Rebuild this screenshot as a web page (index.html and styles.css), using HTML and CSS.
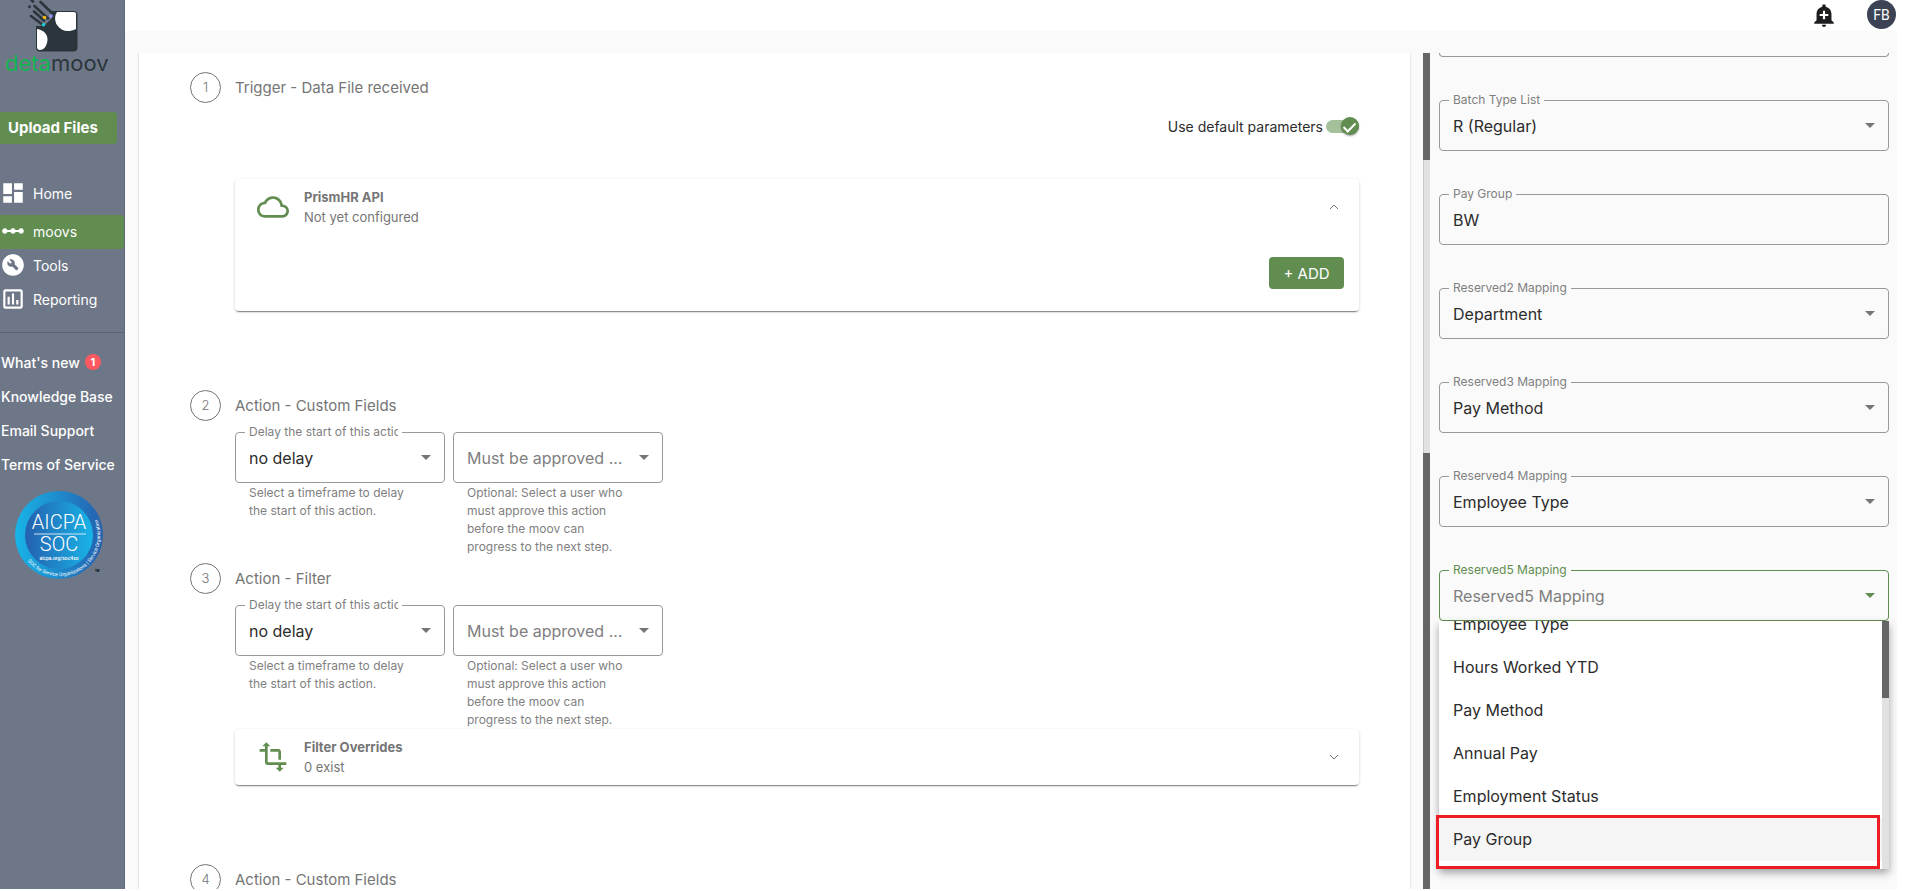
FILE: index.html
```
<!DOCTYPE html>
<html lang="en">
<head>
  <meta charset="UTF-8">
  <meta name="viewport" content="width=device-width, initial-scale=1.0">
  <title>detamoov - moovs</title>
  <link rel="stylesheet" href="styles.css">
</head>
<body>
<div class="app">
  <aside class="sidebar">
    <a class="logo" href="#">
      <svg class="logo-mark" viewBox="27 0 51 52">
        <path d="M50 11H73.500a4 4 0 0 1 4 4V47.500a4 4 0 0 1-4 4H40a4 4 0 0 1-4-4V26L44 26L52 18Z" fill="#2b353c"/>
        <path d="M57 12H74a2 2 0 0 1 2 2V29C68 33 61 31 57 25C54 20 55 15 57 12Z" fill="#fff"/>
        <path d="M37 29C44 30 48 35 47.500 40C47 46 44 50 40 50A3 3 0 0 1 37 47Z" fill="#fff"/>
        <g stroke="#2b353c" stroke-width="2.600" stroke-linecap="round">
          <path d="M31 16L43 25M34 11.500L44 20.500M34.500 6L48 18.500M40.500 2L52 13M29.500 6.500v.5M31.500 0L33 1.500"/>
        </g>
        <circle cx="44.500" cy="17.500" r="1.800" fill="#f5b916"/>
        <circle cx="51" cy="16" r="1.800" fill="#8f96f5"/>
        <circle cx="43.500" cy="24.800" r="1.800" fill="#18cfd4"/>
      </svg>
      <span class="logo-text"><span class="logo-green">deta</span>moov</span>
    </a>

    <button class="upload-button" type="button">Upload Files</button>

    <nav class="nav">
      <a class="nav-item" href="#">
        <svg class="nav-icon" viewBox="0 0 24 24"><path d="M3 13h8V3H3v10zm0 8h8v-6H3v6zm10 0h8V11h-8v10zm0-18v6h8V3h-8z"/></svg>
        Home
      </a>
      <a class="nav-item active" href="#">
        <svg class="nav-icon" viewBox="0 0 24 24"><path d="M19.500 9.500c-1.030 0-1.900.62-2.290 1.500h-2.920c-.39-.88-1.260-1.500-2.290-1.500s-1.900.62-2.290 1.500H6.790c-.39-.88-1.260-1.500-2.290-1.500C3.120 9.500 2 10.620 2 12s1.120 2.500 2.500 2.500c1.030 0 1.900-.62 2.290-1.500h2.920c.39.88 1.260 1.500 2.290 1.500s1.900-.62 2.290-1.500h2.920c.39.88 1.260 1.500 2.290 1.500 1.380 0 2.500-1.120 2.500-2.500s-1.120-2.500-2.500-2.500z"/></svg>
        moovs
      </a>
      <a class="nav-item" href="#">
        <svg class="nav-icon" viewBox="0 0 24 24"><path fill-rule="evenodd" d="M12 2C6.480 2 2 6.480 2 12s4.480 10 10 10 10-4.480 10-10S17.520 2 12 2zm4.900 13.490l-1.400 1.400c-.2.200-.51.200-.71 0l-3.410-3.410c-1.220.43-2.640.17-3.620-.81-1.110-1.110-1.300-2.790-.59-4.100l2.350 2.350 1.410-1.410-2.350-2.350c1.320-.71 2.990-.52 4.100.59.98.98 1.240 2.400.81 3.620l3.410 3.410c.19.190.19.510 0 .71z"/></svg>
        Tools
      </a>
      <a class="nav-item" href="#">
        <svg class="nav-icon" viewBox="0 0 24 24"><path d="M19 3H5c-1.100 0-2 .9-2 2v14c0 1.100.9 2 2 2h14c1.100 0 2-.9 2-2V5c0-1.100-.9-2-2-2zm0 16H5V5h14v14zM7 10h2v7H7zm4-3h2v10h-2zm4 6h2v4h-2z"/></svg>
        Reporting
      </a>
    </nav>

    <nav class="links">
      <a href="#">What's new <span class="count">1</span></a>
      <a href="#">Knowledge Base</a>
      <a href="#">Email Support</a>
      <a href="#">Terms of Service</a>
    </nav>

    <svg class="soc" viewBox="0 0 88 88">
      <defs>
        <linearGradient id="socOuter"><stop offset="0" stop-color="#18b4e8"/><stop offset="1" stop-color="#2560ae"/></linearGradient>
        <linearGradient id="socInner"><stop offset="0" stop-color="#2560ae"/><stop offset="1" stop-color="#18b4e8"/></linearGradient>
        <path id="socArc" d="M12.500 70A41 41 0 0 0 82 28"/>
      </defs>
      <circle cx="44" cy="44" r="44" fill="url(#socOuter)"/>
      <circle cx="44" cy="44" r="34" fill="url(#socInner)"/>
      <path d="M19 43H71" stroke="#fff" stroke-width=".8"/>
      <g fill="#fff" text-anchor="middle">
        <text class="soc-big" x="44" y="38">AICPA</text>
        <text class="soc-big" x="44" y="60">SOC</text>
        <text class="soc-url" x="44" y="69">aicpa.org/soc4so</text>
      </g>
      <text class="soc-ring" fill="#fff"><textPath href="#socArc">SOC for Service Organizations | Service Organizations</textPath></text>
      <text class="soc-tm" x="80" y="81">TM</text>
    </svg>
  </aside>

  <div class="main">
    <header class="topbar">
      <button class="bell" type="button" aria-label="Notifications">
        <svg viewBox="0 0 24 24"><path d="M10.010 21.010c0 1.100.89 1.990 1.990 1.990s1.990-.89 1.990-1.990h-3.980zm8.870-4.190V11c0-3.250-2.250-5.970-5.290-6.690v-.72C13.590 2.710 12.880 2 12 2s-1.590.71-1.590 1.590v.72C7.370 5.030 5.120 7.750 5.120 11v5.820L3 18.940V20h18v-1.060l-2.120-2.120zM16 13.010h-3v3h-2v-3H8V11h3V8h2v3h3v2.010z"/></svg>
      </button>
      <button class="avatar" type="button">FB</button>
    </header>

    <div class="content">
      <section class="stepper">
        <div class="step">
          <span class="step-number">1</span>
          <h2 class="step-title">Trigger - Data File received</h2>
          <div class="step-body">
            <div class="default-row">
              <label for="useDefault">Use default parameters</label>
              <input class="toggle" id="useDefault" type="checkbox" checked>
            </div>
            <div class="card">
              <div class="card-header">
                <svg class="card-icon" viewBox="0 0 24 24"><path d="M19.350 10.040C18.670 6.590 15.640 4 12 4 9.110 4 6.600 5.640 5.350 8.040 2.340 8.360 0 10.910 0 14c0 3.310 2.690 6 6 6h13c2.760 0 5-2.240 5-5 0-2.640-2.050-4.780-4.650-4.960zM19 18H6c-2.210 0-4-1.790-4-4 0-2.050 1.530-3.760 3.560-3.970l1.070-.11.500-.95C8.080 7.140 9.940 6 12 6c2.620 0 4.880 1.860 5.390 4.430l.3 1.500 1.530.11c1.560.1 2.780 1.410 2.780 2.960 0 1.650-1.350 3-3 3z"/></svg>
                <div class="card-heading">
                  <h3>PrismHR API</h3>
                  <p>Not yet configured</p>
                </div>
                <button class="expand" type="button" aria-label="Collapse"><svg viewBox="0 0 10 6"><path d="M1 5L5 1L9 5"/></svg></button>
              </div>
              <div class="card-actions">
                <button class="add-button" type="button">+ ADD</button>
              </div>
            </div>
          </div>
        </div>

        <div class="step">
          <span class="step-number">2</span>
          <h2 class="step-title">Action - Custom Fields</h2>
          <div class="step-body">
            <div class="field-row">
              <div class="field-group">
                <div class="field">
                  <label for="delay2">Delay the start of this action</label>
                  <select id="delay2"><option>no delay</option></select>
                </div>
                <p class="hint">Select a timeframe to delay the start of this action.</p>
              </div>
              <div class="field-group">
                <div class="field">
                  <select class="placeholder" id="approver2" aria-label="Must be approved"><option>Must be approved ...</option></select>
                </div>
                <p class="hint">Optional: Select a user who must approve this action before the moov can progress to the next step.</p>
              </div>
            </div>
          </div>
        </div>

        <div class="step">
          <span class="step-number">3</span>
          <h2 class="step-title">Action - Filter</h2>
          <div class="step-body">
            <div class="field-row">
              <div class="field-group">
                <div class="field">
                  <label for="delay3">Delay the start of this action</label>
                  <select id="delay3"><option>no delay</option></select>
                </div>
                <p class="hint">Select a timeframe to delay the start of this action.</p>
              </div>
              <div class="field-group">
                <div class="field">
                  <select class="placeholder" id="approver3" aria-label="Must be approved"><option>Must be approved ...</option></select>
                </div>
                <p class="hint">Optional: Select a user who must approve this action before the moov can progress to the next step.</p>
              </div>
            </div>
            <div class="card">
              <div class="card-header">
                <svg class="card-icon" viewBox="0 0 24 24"><path d="M22 18v-2H8V4h2L7 1 4 4h2v2H2v2h4v8c0 1.100.9 2 2 2h8v2h-2l3 3 3-3h-2v-2h4zM10 8h6v6h2V8c0-1.100-.9-2-2-2h-6v2z"/></svg>
                <div class="card-heading">
                  <h3>Filter Overrides</h3>
                  <p>0 exist</p>
                </div>
                <button class="expand" type="button" aria-label="Expand"><svg viewBox="0 0 10 6"><path d="M1 1L5 5L9 1"/></svg></button>
              </div>
            </div>
          </div>
        </div>

        <div class="step">
          <span class="step-number">4</span>
          <h2 class="step-title">Action - Custom Fields</h2>
        </div>
      </section>

      <div class="scrollbars">
        <div class="track"><div class="thumb"></div></div>
        <div class="thumb-long"></div>
      </div>

      <section class="panel">
        <div class="field-end"></div>
        <div class="field">
          <label for="batchType">Batch Type List</label>
          <select id="batchType"><option>R (Regular)</option></select>
        </div>
        <div class="field">
          <label for="payGroup">Pay Group</label>
          <input id="payGroup" type="text" value="BW">
        </div>
        <div class="field">
          <label for="reserved2">Reserved2 Mapping</label>
          <select id="reserved2"><option>Department</option></select>
        </div>
        <div class="field">
          <label for="reserved3">Reserved3 Mapping</label>
          <select id="reserved3"><option>Pay Method</option></select>
        </div>
        <div class="field">
          <label for="reserved4">Reserved4 Mapping</label>
          <select id="reserved4"><option>Employee Type</option></select>
        </div>
        <div class="field open">
          <label for="reserved5">Reserved5 Mapping</label>
          <select class="placeholder" id="reserved5"><option>Reserved5 Mapping</option></select>
          <div class="menu">
            <ul class="menu-list" role="listbox" aria-label="Reserved5 Mapping">
              <li role="option">Employee Type</li>
              <li role="option">Hours Worked YTD</li>
              <li role="option">Pay Method</li>
              <li role="option">Annual Pay</li>
              <li role="option">Employment Status</li>
              <li class="hovered" role="option">Pay Group</li>
            </ul>
            <div class="menu-scroll"><div class="menu-thumb"></div></div>
            <div class="highlight"></div>
          </div>
        </div>
      </section>
    </div>
  </div>
</div>
</body>
</html>
```
FILE: styles.css
```
* {
  box-sizing: border-box;
}
body {
  margin: 0;
  padding: 0 8px 2px 0;
  height: 100vh;
  overflow: hidden;
  background: #fff;
  color: #2c2c2c;
  font-family: Inter, "Liberation Sans", sans-serif;
  font-size: 14px;
}
h2, h3, p, ul {
  margin: 0;
  padding: 0;
}
a {
  color: inherit;
  text-decoration: none;
}
button, input, select {
  font-family: inherit;
}
button {
  border: 0;
  padding: 0;
  cursor: pointer;
}
.app {
  display: flex;
  height: 100%;
}

/* sidebar */
.sidebar {
  flex: none;
  width: 125px;
  background: #6e7787;
  border-right: 1px solid #606979;
  color: #fff;
}
.logo {
  display: block;
  height: 112px;
}
.logo-mark {
  display: block;
  width: 51px;
  height: 52px;
  margin-left: 27px;
}
.logo-text {
  display: block;
  padding-left: 5px;
  font-size: 22px;
  line-height: 22px;
  color: #2b353c;
}
.logo-green {
  color: #12b552;
}
.upload-button {
  display: block;
  width: 117px;
  height: 32px;
  padding: 0 0 2px 8px;
  border-radius: 0 4px 4px 0;
  background: #618d50;
  color: #fff;
  font-size: 15px;
  font-weight: 700;
  text-align: left;
}
.nav {
  padding: 33px 0 15px;
  border-bottom: 1px solid #5c6473;
}
.nav-item {
  display: flex;
  align-items: center;
  gap: 7px;
  height: 34px;
  padding-bottom: 2px;
  font-size: 14px;
  font-weight: 400;
}
.nav-item.active {
  margin-top: 4px;
  border-radius: 0 4px 4px 0;
  background: #618d50;
}
.nav-icon {
  width: 26px;
  height: 26px;
  fill: #fff;
}
.links {
  display: flex;
  flex-direction: column;
  padding: 12px 0 10px;
  font-size: 14px;
  font-weight: 500;
  white-space: nowrap;
}
.links a {
  display: flex;
  align-items: center;
  gap: 5px;
  height: 34px;
  padding-left: 1px;
}
.count {
  width: 16px;
  height: 16px;
  border-radius: 50%;
  background: #ff5860;
  font-size: 11px;
  font-weight: 700;
  line-height: 16px;
  text-align: center;
}
.soc {
  display: block;
  width: 88px;
  height: 88px;
  margin-left: 15px;
  overflow: visible;
}
.soc-big {
  font: 300 20px Roboto, sans-serif;
}
.soc-url {
  font: 500 5px Roboto, sans-serif;
}
.soc-ring {
  font: 400 5px Roboto, sans-serif;
}
.soc-tm {
  font: 700 3px Roboto, sans-serif;
}

/* top bar */
.main {
  flex: 1;
  min-width: 0;
  display: flex;
  flex-direction: column;
  background: #fafafa;
}
.topbar {
  flex: none;
  display: flex;
  justify-content: flex-end;
  gap: 30px;
  height: 31px;
  padding-right: 1px;
  background: #fff;
}
.bell {
  width: 26px;
  height: 29px;
  background: none;
}
.bell svg {
  display: block;
  width: 26px;
  height: 26px;
  fill: #1d1d1f;
}
.avatar {
  width: 29px;
  height: 29px;
  border-radius: 50%;
  background: #3b4354;
  color: #fff;
  font-family: Roboto, sans-serif;
  font-size: 14px;
}
.content {
  flex: 1;
  min-height: 0;
  display: flex;
  padding: 22px 0 0 14px;
}

/* steps */
.stepper {
  flex: 1;
  min-width: 0;
  overflow: hidden;
  padding: 19px 51px 0;
  background: #fff;
  box-shadow: 0 0 2px rgba(0, 0, 0, 0.2);
  clip-path: inset(0 -2px 0 -2px);
}
.step {
  display: grid;
  grid-template-columns: 31px 1fr;
  column-gap: 14px;
  align-items: center;
}
.step-number {
  width: 31px;
  height: 31px;
  border: 1px solid #757575;
  border-radius: 50%;
  color: #757575;
  font-size: 13px;
  font-weight: 300;
  line-height: 29px;
  text-align: center;
}
.step-title {
  color: #757575;
  font-size: 15px;
  font-weight: 400;
}
.step-body {
  grid-column: 2;
}
.default-row {
  display: flex;
  justify-content: flex-end;
  align-items: center;
  gap: 3px;
  height: 18px;
  margin: 14px 0 44px;
}
.toggle {
  appearance: none;
  position: relative;
  width: 33px;
  height: 13px;
  margin: 0;
  border-radius: 7px;
  background: #a5c19b;
}
.toggle::before {
  content: "";
  position: absolute;
  right: 0;
  top: -3px;
  width: 18px;
  height: 18px;
  border-radius: 50%;
  background: #618d50;
  box-shadow: 0 1px 2px rgba(0, 0, 0, 0.4);
}
.toggle::after {
  content: "";
  position: absolute;
  right: 6px;
  top: 0;
  width: 5px;
  height: 10px;
  border: solid #fff;
  border-width: 0 2px 2px 0;
  transform: rotate(45deg);
}
.card {
  margin-bottom: 79px;
  border-radius: 4px;
  background: #fff;
  box-shadow: 0 2px 1px -1px rgba(0, 0, 0, 0.4), 0 1px 3px rgba(0, 0, 0, 0.2);
}
.card-header {
  display: flex;
  align-items: center;
  height: 56px;
  padding: 0 15px 0 22px;
}
.card-icon {
  width: 32px;
  height: 32px;
  fill: #618d50;
}
.card-heading {
  flex: 1;
  margin-left: 15px;
  color: #757575;
  font-size: 13px;
  line-height: 20px;
}
.card-heading h3 {
  font-size: 13px;
  font-weight: 700;
}
.expand {
  width: 20px;
  height: 20px;
  background: none;
}
.expand svg {
  display: block;
  width: 10px;
  height: 6px;
  margin: auto;
  fill: none;
  stroke: #757575;
}
.card-actions {
  display: flex;
  justify-content: flex-end;
  padding: 22px 15px;
}
.add-button {
  width: 75px;
  height: 32px;
  border-radius: 4px;
  background: #618d50;
  color: #fff;
  font-size: 15px;
  font-weight: 400;
}

/* outlined fields */
.field-row {
  display: flex;
  gap: 8px;
  padding-top: 11px;
}
.field-group {
  width: 210px;
  min-height: 131px;
}
.step:nth-child(3) .field-group {
  min-height: 124px;
}
.field {
  position: relative;
  height: 51px;
}
.field label {
  position: absolute;
  top: -8px;
  left: 10px;
  max-width: 157px;
  border: solid #fff;
  border-width: 0 4px;
  overflow: hidden;
  background: #fff;
  color: #808080;
  font-size: 12px;
  line-height: 16px;
  white-space: nowrap;
}
.field select,
.field input {
  appearance: none;
  display: block;
  width: 100%;
  height: 100%;
  margin: 0;
  padding: 0 30px 0 13px;
  border: 1px solid #999;
  border-radius: 4px;
  outline: 0;
  background: none;
  color: #2c2c2c;
  font-size: 16px;
}
.field:has(select)::after {
  content: "";
  position: absolute;
  right: 14px;
  top: 23px;
  border: 5px solid transparent;
  border-top-color: #757575;
  border-bottom: 0;
}
.field .placeholder {
  color: #808080;
}
.hint {
  padding: 1px 36px 0 14px;
  color: #808080;
  font-size: 12px;
  line-height: 18px;
}

/* scrollbars between the two columns */
.scrollbars {
  display: flex;
  flex-direction: column;
  width: 7px;
  margin-left: 13px;
}
.track {
  height: 400px;
  background: #e1e1e1;
  border-left: 1px solid #c8c8c8;
}
.thumb {
  width: 7px;
  height: 107px;
  margin-left: -1px;
  background: #666;
}
.thumb-long {
  flex: 1;
  background: #666;
}

/* settings panel */
.panel {
  display: flex;
  flex-direction: column;
  gap: 43px;
  width: 467px;
  padding: 0 8px 0 9px;
}
.field-end {
  height: 4px;
  border: 1px solid #999;
  border-top: 0;
  border-radius: 0 0 4px 4px;
}
.panel .field label {
  border-color: #fafafa;
  background: #fafafa;
}
.panel .open label {
  color: #618d50;
}
.panel .open select {
  border-color: #618d50;
}
.panel .open::after {
  border-top-color: #618d50;
}
.menu {
  position: absolute;
  top: 100%;
  left: 0;
  right: 0;
  display: flex;
  height: 248px;
  background: #fff;
  box-shadow: 0 4px 8px rgba(0, 0, 0, 0.35);
}
.menu-list {
  flex: 1;
  overflow: hidden;
  list-style: none;
}
.menu-list li {
  height: 43px;
  padding-left: 14px;
  font-size: 16px;
  line-height: 43px;
}
.menu-list li:first-child {
  margin-top: -18px;
}
.menu-list .hovered {
  background: #f5f5f5;
}
.menu-scroll {
  width: 7px;
  background: #e1e1e1;
}
.menu-thumb {
  height: 77px;
  background: #666;
}
.highlight {
  position: absolute;
  left: -3px;
  right: 9px;
  bottom: 0;
  height: 54px;
  border: 3px solid #ee1c25;
}
```
